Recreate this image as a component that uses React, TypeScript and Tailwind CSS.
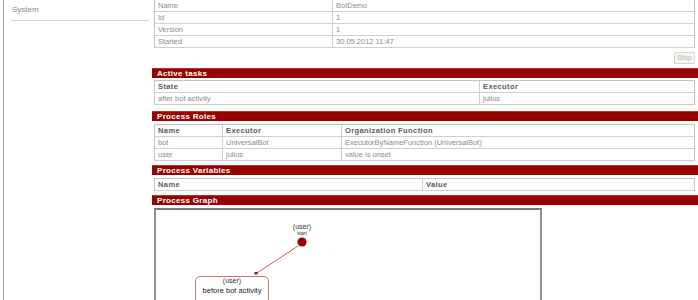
import React from "react";

const font = { fontFamily: '"Liberation Sans", Arial, sans-serif' };

function Bar({ title, className = "" }: { title: string; className?: string }) {
  return (
    <div
      className={`h-[10px] bg-[#990000] border-t border-[#b33333] text-white font-bold text-[8px] leading-[9px] tracking-[0.3px] pl-[5px] ${className}`}
    >
      {title}
    </div>
  );
}

function Cell({
  children,
  head = false,
  last = false,
}: {
  children?: React.ReactNode;
  head?: boolean;
  last?: boolean;
}) {
  return (
    <div
      className={`h-[12px] border-b border-[#cfcfcf] ${last ? "" : "border-r"} pl-[3px] text-[7.5px] leading-[11px] whitespace-nowrap overflow-hidden ${
        head ? "font-bold text-[#5a5a5a] tracking-[0.4px]" : "text-[#8c8c8c]"
      }`}
    >
      {children}
    </div>
  );
}

export default function App() {
  return (
    <div className="w-[698px] h-[300px] overflow-hidden bg-white flex" style={font}>
      {/* Sidebar */}
      <div className="w-[152px] flex-none pl-[3px] h-full">
        <div className="h-full border-l border-[#a6a6a6] pl-[7px] pr-[3px]">
          <div className="h-[21px] border-b border-[#d9d2c4] pl-[1px] pt-[5px] text-[8px] leading-[10px] text-[#8a8a8a]">
            System
          </div>
        </div>
      </div>

      {/* Main */}
      <div className="flex-1 flex flex-col">
        {/* Info table */}
        <div className="ml-[2px] mr-[3px] grid grid-cols-[178px_1fr] border-l border-r border-[#c4c4c4]">
          <Cell>Name</Cell>
          <Cell last>BotDemo</Cell>
          <Cell>Id</Cell>
          <Cell last>1</Cell>
          <Cell>Version</Cell>
          <Cell last>1</Cell>
          <Cell>Started</Cell>
          <Cell last>30.05.2012 11:47</Cell>
        </div>

        <div className="flex justify-end mr-[3px] mt-[4px]">
          <button className="w-[21px] h-[12px] border border-[#d8d8cc] bg-[#f6f6f0] rounded-[1px] text-[7px] leading-[10px] text-[#b5b5b5] p-0">
            Stop
          </button>
        </div>

        {/* Active tasks */}
        <Bar title="Active tasks" className="mt-[4px]" />
        <div className="ml-[2px] mr-[3px] mt-[2px] grid grid-cols-[325px_1fr] border-l border-r border-t border-[#c4c4c4]">
          <Cell head>State</Cell>
          <Cell head last>Executor</Cell>
          <Cell>after bot activity</Cell>
          <Cell last>julius</Cell>
        </div>

        {/* Process Roles */}
        <Bar title="Process Roles" className="mt-[6px]" />
        <div className="ml-[2px] mr-[3px] mt-[3px] grid grid-cols-[68px_119px_1fr] border-l border-r border-t border-[#c4c4c4]">
          <Cell head>Name</Cell>
          <Cell head>Executor</Cell>
          <Cell head last>Organization Function</Cell>
          <Cell>bot</Cell>
          <Cell>UniversalBot</Cell>
          <Cell last>ExecutorByNameFunction (UniversalBot)</Cell>
          <Cell>user</Cell>
          <Cell>julius</Cell>
          <Cell last>value is unset</Cell>
        </div>

        {/* Process Variables */}
        <Bar title="Process Variables" className="mt-[4px]" />
        <div className="ml-[2px] mr-[3px] mt-[3px] grid grid-cols-[268px_1fr] border-l border-r border-t border-[#c4c4c4]">
          <Cell head>Name</Cell>
          <Cell head last>Value</Cell>
        </div>

        {/* Process Graph */}
        <Bar title="Process Graph" className="mt-[4px]" />
        <div className="ml-[2px] mt-[3px] w-[388px] h-[120px] flex-none border-2 border-[#8e8e8e] border-t-[#7a7a7a] relative bg-white">
          <svg className="absolute left-0 top-0" width="384" height="116">
            <line x1="142" y1="36" x2="101" y2="63" stroke="#c85a5a" strokeWidth="1" />
            <rect x="98.5" y="62" width="3" height="2.5" fill="#8b1a1a" />
            <circle cx="146" cy="32" r="4.6" fill="#990000" />
          </svg>
          <div className="absolute left-[126px] top-[13px] w-[40px] text-center text-[7px] leading-[8px] text-[#333]">
            (user)
          </div>
          <div className="absolute left-[126px] top-[20px] w-[40px] text-center text-[5px] leading-[6px] text-[#333]">
            start
          </div>
          <div className="absolute left-[39px] top-[66px] w-[74px] h-[40px] border border-[#cf7a7a] rounded-[5px] bg-white flex flex-col items-center">
            <div className="text-[7px] leading-[8px] text-[#333]">(user)</div>
            <div className="text-[7.5px] leading-[10px] text-[#222] mt-[1px]">before bot activity</div>
          </div>
        </div>
      </div>
    </div>
  );
}
